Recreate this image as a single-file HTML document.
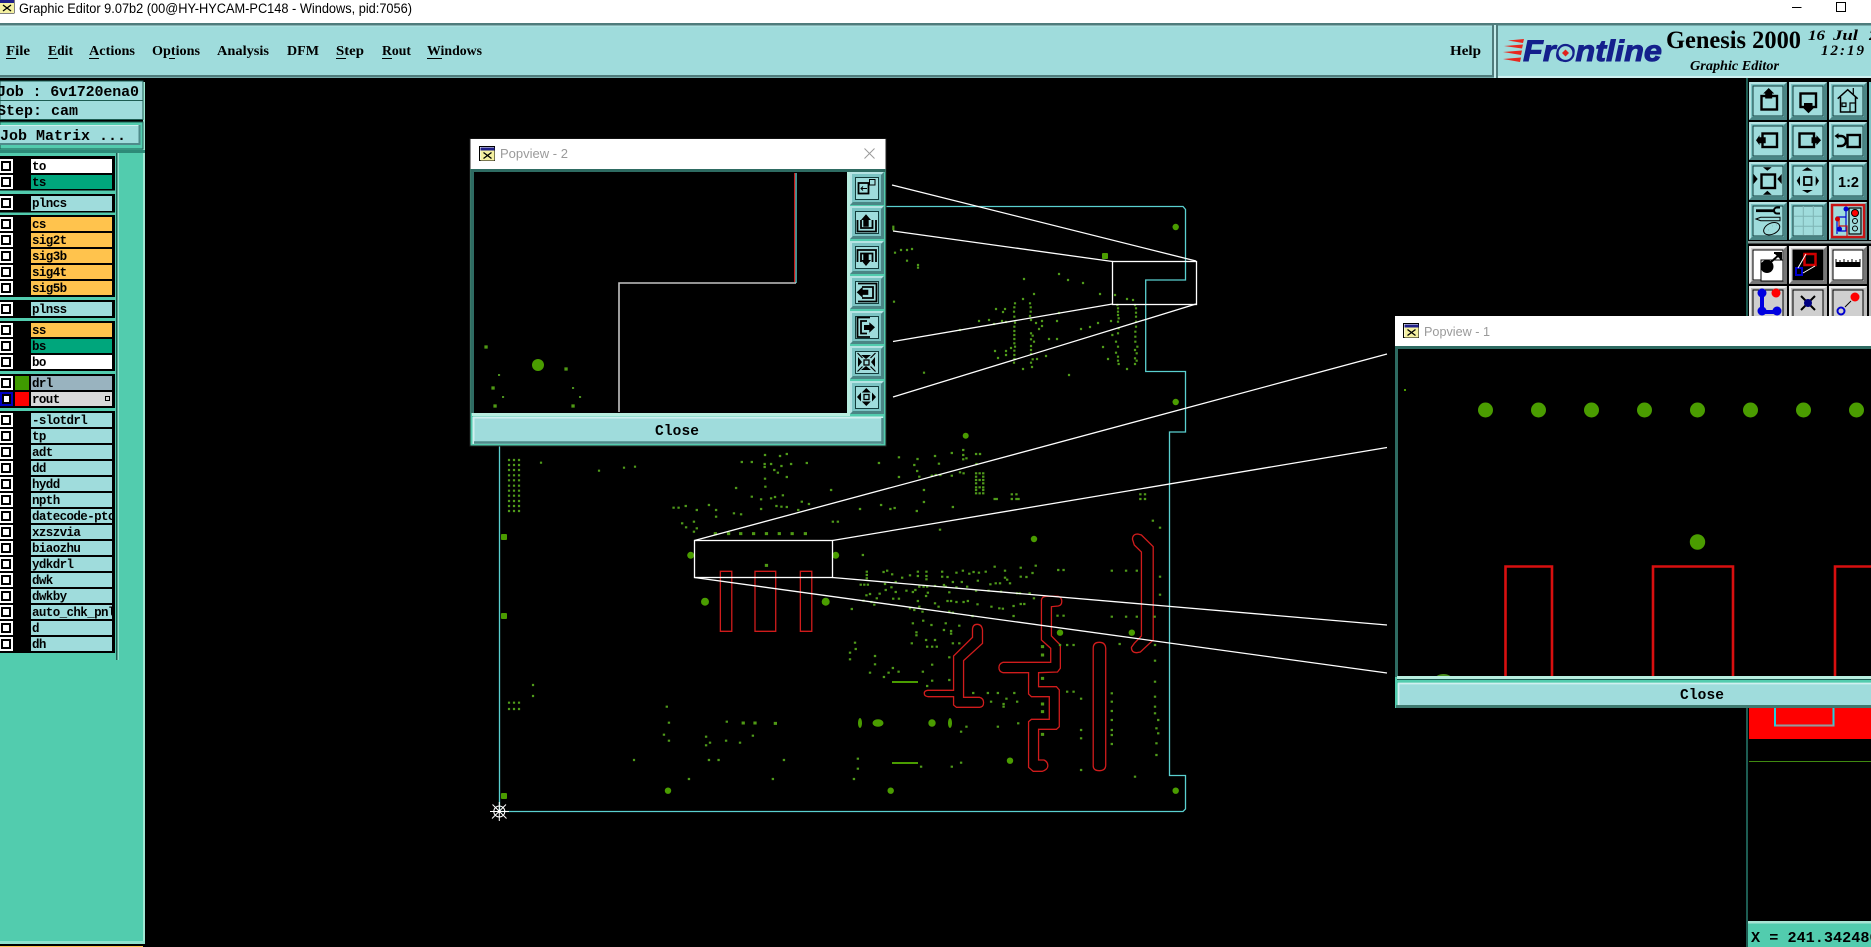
<!DOCTYPE html>
<html lang="en">
<head>
<meta charset="utf-8">
<title>Graphic Editor</title>
<style>
html,body{margin:0;padding:0;background:#000;width:1871px;height:947px;overflow:hidden}
svg{display:block}
.m{font-family:"Liberation Mono",monospace;font-weight:700;fill:#000}
.n{font-family:"Liberation Mono",monospace;font-weight:700;font-size:12.5px;letter-spacing:-.6px;fill:#000}
.s{font-family:"Liberation Serif",serif;font-weight:700;font-size:14px;fill:#000}
.t{font-family:"Liberation Sans",sans-serif;font-size:13px}
.d{font-family:"Liberation Serif",serif;font-weight:700;font-style:italic;font-size:15px;fill:#000}
</style>
</head>
<body>
<svg xmlns="http://www.w3.org/2000/svg" width="1871" height="947" viewBox="0 0 1871 947">
<defs>
<clipPath id="cn"><rect x="31" y="0" width="81" height="947"/></clipPath>
<clipPath id="p1"><rect x="1398" y="349" width="473" height="327"/></clipPath>
<g id="win">
<rect x="0" y="0" width="15" height="14" fill="#fff" stroke="#000"/>
<rect x="1" y="1" width="14" height="3" fill="#20208a"/>
<rect x="1" y="4" width="14" height="10" fill="#f4f0a0"/>
<path d="M4 6l8 6M12 6l-8 6" stroke="#000" stroke-width="1.3"/>
</g>
<g id="tb">
<rect width="38" height="38" fill="#7cc4c4"/>
<path d="M0 0h38l-2 2H2v34l-2 2z" fill="#b5e3e3"/>
<path d="M38 38H0l3-3h32V3l3-3z" fill="#4a8585"/>
<rect x="4" y="4" width="30" height="30" fill="#9fdcdc" stroke="#123c3c"/>
</g>
<g id="tw">
<rect width="38" height="38" fill="#cfcfcf"/>
<path d="M0 0h38l-2 2H2v34l-2 2z" fill="#f0f0f0"/>
<path d="M38 38H0l3-3h32V3l3-3z" fill="#777"/>
<rect x="4" y="4" width="30" height="30" fill="#fff" stroke="#000"/>
</g>
<g id="tg">
<rect width="38" height="38" fill="#bdbdbd"/>
<path d="M0 0h38l-2 2H2v34l-2 2z" fill="#eee"/>
<rect x="4" y="4" width="30" height="30" fill="#cfcfcf" stroke="#000"/>
</g>
<g id="pb">
<rect width="34" height="33" fill="#7cc4c4"/>
<path d="M0 0h34l-2 2H2v29l-2 2z" fill="#b5e3e3"/>
<path d="M34 33H0l3-3h28V3l3-3z" fill="#4a8585"/>
<rect x="5.500" y="5.500" width="23" height="22" fill="#9fdcdc" stroke="#123c3c"/>
</g>
</defs>

<rect width="1871" height="947" fill="#000"/>

<!-- title bar -->
<rect width="1871" height="23" fill="#fff"/>
<use href="#win" x="-1" y="-1"/>
<text class="t" x="19" y="13" fill="#000" textLength="393" lengthAdjust="spacingAndGlyphs" style="font-size:13.5px">Graphic Editor 9.07b2 (00@HY-HYCAM-PC148 - Windows, pid:7056)</text>
<path d="M1792 7.500h9.500" stroke="#000"/>
<rect x="1836.500" y="2.500" width="9" height="9" fill="none" stroke="#000"/>

<!-- menu bar -->
<rect y="23" width="1871" height="55" fill="#9fdcdc"/>
<rect y="23" width="1871" height="2.500" fill="#4f7c7c"/>
<rect y="25.500" width="1494" height="1" fill="#b9e8e8"/>
<rect y="75" width="1494" height="2.500" fill="#4f7c7c"/>
<rect x="1492" y="25" width="2" height="52" fill="#4f7c7c"/>
<rect x="1494" y="25" width="2" height="53" fill="#c4ecec"/>
<rect x="1496" y="25" width="2" height="53" fill="#4f7c7c"/>
<rect x="1498" y="76" width="373" height="2" fill="#d0f0f0"/>
<g>
<text class="s" x="6" y="55" textLength="24" lengthAdjust="spacingAndGlyphs">File</text>
<text class="s" x="48" y="55" textLength="25" lengthAdjust="spacingAndGlyphs">Edit</text>
<text class="s" x="89" y="55" textLength="46" lengthAdjust="spacingAndGlyphs">Actions</text>
<text class="s" x="152" y="55" textLength="48" lengthAdjust="spacingAndGlyphs">Options</text>
<text class="s" x="217" y="55" textLength="52" lengthAdjust="spacingAndGlyphs">Analysis</text>
<text class="s" x="287" y="55" textLength="32" lengthAdjust="spacingAndGlyphs">DFM</text>
<text class="s" x="336" y="55" textLength="28" lengthAdjust="spacingAndGlyphs">Step</text>
<text class="s" x="382" y="55" textLength="29" lengthAdjust="spacingAndGlyphs">Rout</text>
<text class="s" x="427" y="55" textLength="55" lengthAdjust="spacingAndGlyphs">Windows</text>
<text class="s" x="1450" y="55" textLength="31" lengthAdjust="spacingAndGlyphs">Help</text>
<path d="M6 58.500h10M48 58.500h10M89 58.500h10M169 58.500h6M336 58.500h10M382 58.500h10M427 58.500h15" stroke="#000"/>
</g>

<!-- logo -->
<g>
<path d="M1508 40.500l16-1.500-1 4zM1504 46l19-1.500-1 4zM1503 52l19-1.500-1 4.500zM1503 59l18-1.500-1 4.500z" fill="#e8281e"/>
<text x="1523" y="61" textLength="139" lengthAdjust="spacingAndGlyphs" stroke="#14208c" stroke-width=".9" style="font-family:'Liberation Sans',sans-serif;font-weight:700;font-style:italic;font-size:30px" fill="#14208c">Frontline</text>
<circle cx="1565.500" cy="53" r="8" fill="#9fdcdc" stroke="#14208c" stroke-width="2.200"/>
<path d="M1565.500 49.500l3.500 3.500-3.500 3.500-3.500-3.500z" fill="#e0201a"/>
<text x="1666" y="48" textLength="135" lengthAdjust="spacingAndGlyphs" style="font-family:'Liberation Serif',serif;font-weight:700;font-size:25px" fill="#000">Genesis 2000</text>
<text x="1690" y="70" textLength="89" lengthAdjust="spacingAndGlyphs" style="font-family:'Liberation Serif',serif;font-weight:700;font-style:italic;font-size:14px" fill="#000">Graphic Editor</text>
<text class="d" x="1808" y="40" textLength="17" lengthAdjust="spacingAndGlyphs">16</text>
<text class="d" x="1833" y="40" textLength="25" lengthAdjust="spacingAndGlyphs">Jul</text>
<text class="d" x="1869" y="40">2</text>
<text class="d" x="1821" y="55" textLength="43">12:19</text>
</g>

<!-- left panel -->
<rect y="78" width="143" height="863" fill="#52ccae"/>
<rect x="143" y="78" width="2" height="866" fill="#a0e8d4"/>
<rect y="941" width="145" height="3" fill="#8fe2cc"/>
<rect y="944" width="143" height="2" fill="#000"/>
<rect y="946" width="143" height="1" fill="#ffc34d"/>
<rect y="78" width="145" height="4" fill="#000"/>
<rect y="81" width="143" height="19.500" fill="#9fdcdc" stroke="#1d5c52"/>
<rect y="100.500" width="143" height="19" fill="#9fdcdc" stroke="#1d5c52"/>
<rect y="120" width="143" height="2" fill="#000"/>
<rect y="122" width="143" height="27" fill="#52ccae" stroke="#1d5c52"/>
<rect y="125" width="139" height="20" fill="#9fdcdc"/>
<path d="M0 125.500h139" stroke="#d0f0f0"/>
<path d="M0 144h139.500V125" fill="none" stroke="#4f8a8a" stroke-width="2"/>
<rect y="150" width="145" height="3" fill="#2d8a78"/>
<text class="m" x="-3" y="96" style="font-size:15px" textLength="142">Job : 6v1720ena0</text>
<text class="m" x="-3" y="115" style="font-size:15px">Step: cam</text>
<text class="m" x="0" y="140" style="font-size:15px">Job Matrix ...</text>
<rect x="116" y="153" width="1.500" height="507" fill="#1d5c52"/>
<rect x="117.500" y="153" width="1.500" height="507" fill="#8fe2cc"/>

<!-- layer frames -->
<g fill="#000">
<rect y="156" width="115" height="34.500"/>
<rect y="194" width="115" height="18.500"/>
<rect y="215" width="115" height="82"/>
<rect y="300" width="115" height="18"/>
<rect y="321" width="115" height="50"/>
<rect y="374" width="115" height="34"/>
<rect y="411" width="115" height="242"/>
</g>
<g fill="#fff">
<rect y="159" width="13" height="14"/><rect y="175" width="13" height="14"/><rect y="196" width="13" height="14"/>
<rect y="217" width="13" height="14"/><rect y="233" width="13" height="14"/><rect y="249" width="13" height="14"/><rect y="265" width="13" height="14"/><rect y="281" width="13" height="14"/>
<rect y="302" width="13" height="14"/><rect y="323" width="13" height="14"/><rect y="339" width="13" height="14"/><rect y="355" width="13" height="14"/>
<rect y="376" width="13" height="14"/>
<rect y="413" width="13" height="14"/><rect y="429" width="13" height="14"/><rect y="445" width="13" height="14"/><rect y="461" width="13" height="14"/><rect y="477" width="13" height="14"/><rect y="493" width="13" height="14"/><rect y="509" width="13" height="14"/><rect y="525" width="13" height="14"/><rect y="541" width="13" height="14"/><rect y="557" width="13" height="14"/><rect y="573" width="13" height="14"/><rect y="589" width="13" height="14"/><rect y="605" width="13" height="14"/><rect y="621" width="13" height="14"/><rect y="637" width="13" height="14"/>
</g>
<rect y="392" width="13" height="14" fill="#0000c0"/>
<rect x="2" y="394" width="9" height="10" fill="#fff"/>
<g fill="none" stroke="#000" stroke-width="2">
<rect x="2" y="162" width="8" height="8"/><rect x="2" y="178" width="8" height="8"/><rect x="2" y="199" width="8" height="8"/>
<rect x="2" y="220" width="8" height="8"/><rect x="2" y="236" width="8" height="8"/><rect x="2" y="252" width="8" height="8"/><rect x="2" y="268" width="8" height="8"/><rect x="2" y="284" width="8" height="8"/>
<rect x="2" y="305" width="8" height="8"/><rect x="2" y="326" width="8" height="8"/><rect x="2" y="342" width="8" height="8"/><rect x="2" y="358" width="8" height="8"/>
<rect x="2" y="379" width="8" height="8"/><rect x="3" y="395" width="7" height="8"/>
<rect x="2" y="416" width="8" height="8"/><rect x="2" y="432" width="8" height="8"/><rect x="2" y="448" width="8" height="8"/><rect x="2" y="464" width="8" height="8"/><rect x="2" y="480" width="8" height="8"/><rect x="2" y="496" width="8" height="8"/><rect x="2" y="512" width="8" height="8"/><rect x="2" y="528" width="8" height="8"/><rect x="2" y="544" width="8" height="8"/><rect x="2" y="560" width="8" height="8"/><rect x="2" y="576" width="8" height="8"/><rect x="2" y="592" width="8" height="8"/><rect x="2" y="608" width="8" height="8"/><rect x="2" y="624" width="8" height="8"/><rect x="2" y="640" width="8" height="8"/>
</g>
<rect x="15" y="376" width="14" height="14" fill="#3f9a00"/>
<rect x="15" y="392" width="14" height="14" fill="#ff0000"/>
<g>
<rect x="31" y="159" width="81" height="14" fill="#fff"/><rect x="31" y="175" width="81" height="14" fill="#00a67c"/>
<rect x="31" y="196" width="81" height="15" fill="#9fdcdc"/>
<rect x="31" y="217" width="81" height="14" fill="#ffc34d"/><rect x="31" y="233" width="81" height="14" fill="#ffc34d"/><rect x="31" y="249" width="81" height="14" fill="#ffc34d"/><rect x="31" y="265" width="81" height="14" fill="#ffc34d"/><rect x="31" y="281" width="81" height="14" fill="#ffc34d"/>
<rect x="31" y="302" width="81" height="14" fill="#9fdcdc"/>
<rect x="31" y="323" width="81" height="14" fill="#ffc34d"/><rect x="31" y="339" width="81" height="14" fill="#00a67c"/><rect x="31" y="355" width="81" height="14" fill="#fff"/>
<rect x="31" y="376" width="81" height="14" fill="#99b3bf"/><rect x="31" y="392" width="81" height="14" fill="#d9d9d9"/>
<g fill="#9fdcdc">
<rect x="31" y="413" width="81" height="14"/><rect x="31" y="429" width="81" height="14"/><rect x="31" y="445" width="81" height="14"/><rect x="31" y="461" width="81" height="14"/><rect x="31" y="477" width="81" height="14"/><rect x="31" y="493" width="81" height="14"/><rect x="31" y="509" width="81" height="14"/><rect x="31" y="525" width="81" height="14"/><rect x="31" y="541" width="81" height="14"/><rect x="31" y="557" width="81" height="14"/><rect x="31" y="573" width="81" height="14"/><rect x="31" y="589" width="81" height="14"/><rect x="31" y="605" width="81" height="14"/><rect x="31" y="621" width="81" height="14"/><rect x="31" y="637" width="81" height="14"/>
</g>
</g>
<rect x="105.500" y="396.500" width="4" height="4" fill="none" stroke="#000"/>
<g clip-path="url(#cn)">
<text class="n" x="32" y="170">to</text><text class="n" x="32" y="186">ts</text><text class="n" x="32" y="207">plncs</text>
<text class="n" x="32" y="228">cs</text><text class="n" x="32" y="244">sig2t</text><text class="n" x="32" y="260">sig3b</text><text class="n" x="32" y="276">sig4t</text><text class="n" x="32" y="292">sig5b</text>
<text class="n" x="32" y="313">plnss</text><text class="n" x="32" y="334">ss</text><text class="n" x="32" y="350">bs</text><text class="n" x="32" y="366">bo</text>
<text class="n" x="32" y="387">drl</text><text class="n" x="32" y="403">rout</text>
<text class="n" x="32" y="424">-slotdrl</text><text class="n" x="32" y="440">tp</text><text class="n" x="32" y="456">adt</text><text class="n" x="32" y="472">dd</text><text class="n" x="32" y="488">hydd</text><text class="n" x="32" y="504">npth</text><text class="n" x="32" y="520">datecode-ptc</text><text class="n" x="32" y="536">xzszvia</text><text class="n" x="32" y="552">biaozhu</text><text class="n" x="32" y="568">ydkdrl</text><text class="n" x="32" y="584">dwk</text><text class="n" x="32" y="600">dwkby</text><text class="n" x="32" y="616">auto_chk_pnl</text><text class="n" x="32" y="632">d</text><text class="n" x="32" y="648">dh</text>
</g>

<!-- board outline -->
<path d="M499.500 440V811.500H1183l2.500-2.500V775.500H1169.500V432H1185.500V371.500H1145.700V280H1185.500V209.500L1183 206.500H880" fill="none" stroke="#5ad0d0" stroke-width="1.300"/>

<!-- red routs -->
<g transform="translate(660 430) scale(.35714 .33333)" fill="none" stroke="#d01c1c" stroke-width="1.300">
<path vector-effect="non-scaling-stroke" d="M169 424h32v180h-32zM266 424h58v180h-58zM393 424h32v180h-32z"/>
<path vector-effect="non-scaling-stroke" d="M875 600Q875 583 888 583T903 600V640L850 692V802H895Q906 805 906 818T895 832H830L822 825V800H750Q740 798 740 790T750 781H822V678L875 622Z"/>
<path vector-effect="non-scaling-stroke" d="M1068 510Q1070 499 1082 499H1115Q1125 502 1125 514T1115 528L1096 530V618L1121 645V715L1113 726 1060 728V770H1110L1118 780V890L1110 898H1060V990H1075Q1086 995 1086 1007T1070 1024H1045L1032 1012V875L1040 868H1090V800H1040L1032 792V728H960Q949 725 949 713T960 697H1094V655L1068 630Z"/>
<path vector-effect="non-scaling-stroke" d="M1213 655Q1213 637 1230 637T1248 655V1005Q1248 1022 1230 1022T1213 1005Z"/>
<path vector-effect="non-scaling-stroke" d="M1323 328Q1323 312 1338 312L1348 315 1381 350V630L1345 666 1335 668Q1320 668 1320 652L1328 640 1348 618V366L1328 345Z"/>
</g>

<!-- small dots -->
<g fill="none" stroke="#4f9a1a" stroke-linecap="square">
<path transform="translate(660 430) scale(.35714 .33333)" stroke-width="6.500" d="M294 75h.1M336 78h.1M355 72h.1M229 96h.1M257 96h.1M293 102h.1M311 102h.1M340 108h.1M367 102h.1M411 99h.1M293 111h.1M320 120h.1M330 128h.1M294 146h.1M355 141h.1M213 174h.1M295 170h.1M283 208h.1M257 200h.1M311 205h.1M322 201h.1M344 196h.1M479 180h.1M397 215h.1M417 222h.1M326 228h.1M340 230h.1M355 231h.1M283 237h.1M137 225h.1M72 228h.1M52 233h.1M38 233h.1M103 240h.1M157 240h.1M207 250h.1M227 253h.1M157 260h.1M62 280h.1M95 275h.1M73 292h.1M103 295h.1M95 305h.1M484 275h.1M498 275h.1M387 240h.1M669 82h.1M770 78h.1M817 69h.1M849 60h.1M849 75h.1M849 88h.1M858 85h.1M885 72h.1M896 72h.1M721 87h.1M712 105h.1M613 99h.1M781 101h.1M720 123h.1M669 141h.1M739 180h.1M739 216h.1M619 225h.1M560 237h.1M645 237h.1M657 234h.1M719 243h.1M820 231h.1M784 299h.1M726 140h.1M761 137h.1M772 135h.1M785 135h.1M817 137h.1M840 127h.1M850 130h.1M886 102h.1M885 130h.1M895 130h.1M905 130h.1M885 140h.1M905 140h.1M885 150h.1M895 150h.1M905 150h.1M885 160h.1M905 160h.1M885 172h.1M895 172h.1M905 172h.1M885 180h.1M905 180h.1M885 190h.1M895 190h.1M905 190h.1M937 207h6M985 193h.1M998 193h.1M985 207h.1M998 207h6M1345 193h.1M1358 193h.1M1345 207h.1M1358 207h.1M568 375h.1M579 425h.1M579 435h.1M579 445h.1M562 464h.1M572 464h.1M582 464h.1M636 422h.1M626 426h.1M650 433h.1M678 443h.1M700 436h.1M722 425h.1M722 438h.1M746 425h.1M746 438h.1M746 448h.1M790 425h.1M790 440h.1M805 441h.1M830 428h.1M848 422h.1M866 431h.1M878 426h.1M893 428h.1M912 425h.1M937 410h.1M966 422h.1M1010 413h.1M1052 407h.1M1043 429h.1M1010 440h.1M1026 441h.1M966 443h.1M972 449h.1M890 452h.1M845 456h.1M820 456h.1M795 465h.1M770 468h.1M748 470h.1M738 470h.1M660 456h.1M630 462h.1M648 472h.1M660 486h.1M690 482h.1M708 486h.1M715 480h.1M726 470h.1M750 488h.1M745 498h.1M632 480h.1M615 491h.1M588 492h.1M578 496h.1M607 505h.1M592 516h.1M570 512h.1M600 524h.1M653 506h.1M669 506h.1M722 513h.1M726 530h.1M770 520h.1M780 530h.1M805 513h.1M815 513h.1M830 516h.1M850 516h.1M862 513h.1M889 523h.1M928 530h.1M950 535h.1M960 536h.1M990 528h.1M1010 522h.1M1020 522h.1M1035 490h.1M1047 505h.1M1000 490h.1M980 460h.1M940 460h.1M925 463h.1M952 460h.1M885 482h.1M920 482h.1M955 485h.1M810 487h.1M800 470h.1M830 472h.1M860 470h.1M537 537h.1M700 535h.1M712 540h.1M735 545h.1M810 545h.1M820 548h.1M875 558h.1M990 558h.1M1008 490h.1M1115 420h.1M1130 420h.1M1265 422h.1M1305 422h.1M1335 422h.1M1400 440h.1M1400 494h.1M1113 557h.1M1130 557h.1M1265 560h.1M1305 560h.1M1335 560h.1M1385 560h.1M708 580h.1M737 572h.1M760 585h.1M800 580h.1M838 587h.1M795 600h.1M815 603h.1M815 611h.1M718 607h.1M718 616h.1M705 640h.1M745 630h.1M770 630h.1M748 650h.1M762 650h.1M775 650h.1M820 640h.1M838 640h.1M1380 272h.1M1400 293h.1M1120 645h.1M1140 645h.1M1158 645h.1M1287 642h.1M1386 645h.1M1386 692h.1M1386 755h.1M1386 800h.1M1386 830h.1M1386 850h.1M1395 870h.1M1390 895h.1M1390 940h.1M1390 975h.1M1395 910h.1M1265 790h.1M1265 815h.1M1265 843h.1M1265 870h.1M1265 900h.1M1265 915h.1M1265 942h.1M1140 785h.1M1158 785h.1M1179 806h.1M1179 900h.1M1179 925h.1M1179 1020h.1M1330 1040h.1M546 638h.1M548 657h.1M532 668h.1M532 688h.1M602 678h.1M602 703h.1M588 728h.1M627 741h.1M640 728h.1M652 714h.1M668 725h.1M736 725h.1M762 704h.1M762 752h.1M810 682h.1M810 750h.1M877 789h.1M918 789h.1M946 789h.1M992 789h.1M927 815h.1M962 822h.1M962 830h.1M970 806h.1M1000 815h.1M748 768h.1M858 890h.1M843 905h.1M946 890h.1M1003 880h.1M19 830h.1M25 878h.1M11 914h.1M25 932h.1M129 920h.1M140 938h.1M129 946h.1M187 875h.1M185 932h.1M224 938h.1M260 917h.1M137 990h.1M164 990h.1M347 990h.1M81 1047h.1M316 1047h.1M554 986h.1M554 1016h.1M543 1047h.1M731 1010h.1M817 1010h.1M843 998h.1"/>
<path transform="translate(660 430) scale(.35714 .33333)" stroke="#4f9a14" stroke-width="9" d="M155 311h.1M192 311h.1M226 311h.1M262 311h.1M298 311h.1M334 311h.1M370 311h.1M407 311h.1M298 406h.1M1071 650h.1M1071 675h.1M1071 745h.1M1071 822h.1M1071 845h.1M1071 913h.1M233 879h.1M266 879h.1M323 880h.1"/>
<path transform="translate(480 440) scale(.33333)" stroke-width="6.500" d="M87 60h.1M102 60h.1M117 60h.1M87 75h.1M102 75h.1M117 75h.1M87 90h.1M102 90h.1M117 90h.1M87 106h.1M102 106h.1M117 106h.1M87 121h.1M102 121h.1M117 121h.1M87 137h.1M102 137h.1M117 137h.1M87 152h.1M102 152h.1M117 152h.1M87 167h.1M102 167h.1M117 167h.1M87 183h.1M102 183h.1M117 183h.1M87 198h.1M102 198h.1M117 198h.1M87 213h.1M102 213h.1M117 213h.1M183 68h.1M357 92h.1M432 83h.1M465 80h.1M159 735h.1M159 768h.1M87 788h.1M102 788h.1M117 788h.1M87 807h.1M102 807h.1M117 807h.1M462 960h.1"/>
<path transform="translate(880 190) scale(.33333)" stroke-width="6.500" d="M40 110v8M45 188h.1M63 180h.1M81 180h.1M96 177h.1M81 212h.1M114 225h.1M114 233h.1M42 335h.1M132 548h.1M432 267h.1M537 252h.1M564 270h.1M609 279h.1M660 312h.1M705 315h.1M741 327h.1M759 330h.1M462 312h.1M429 327h.1M405 340h.1M403 352h.1M402 365h.1M403 380h.1M405 398h.1M403 410h.1M403 423h.1M403 435h.1M403 447h.1M403 460h.1M405 470h.1M403 482h.1M403 495h.1M403 507h.1M402 518h.1M450 340h.1M452 352h.1M452 365h.1M450 378h.1M453 390h.1M453 430h.1M458 437h.1M453 448h.1M462 455h.1M453 468h.1M453 480h.1M453 492h.1M458 508h.1M453 518h.1M712 345h.1M714 355h.1M714 365h.1M714 375h.1M716 385h.1M714 395h.1M716 415h.1M714 430h.1M708 455h.1M714 470h.1M708 488h.1M714 500h.1M714 512h.1M716 522h.1M765 345h.1M768 355h.1M768 368h.1M768 380h.1M768 395h.1M768 410h.1M766 425h.1M766 440h.1M766 455h.1M772 470h.1M765 480h.1M770 490h.1M765 505h.1M770 512h.1M765 522h.1M348 357h.1M375 357h.1M369 366h.1M297 393h.1M327 390h.1M366 393h.1M342 402h.1M378 396h.1M468 399h.1M486 393h.1M486 408h.1M477 417h.1M537 369h.1M531 393h.1M507 447h.1M531 447h.1M345 483h.1M378 483h.1M378 495h.1M354 504h.1M393 474h.1M471 507h.1M498 498h.1M429 537h.1M456 531h.1M603 417h.1M630 411h.1M654 399h.1M693 393h.1M697 435h.1M669 471h.1M684 507h.1M741 537h.1M567 555h.1M240 420h.1"/>
</g>

<!-- big green pads -->
<g fill="#4a9c00">
<rect x="501" y="534" width="6" height="6" rx="1"/><rect x="501" y="613" width="6" height="6" rx="1"/><rect x="501" y="793" width="6" height="6" rx="1"/>
<circle cx="690.700" cy="555.300" r="3.500"/><circle cx="835.700" cy="555.300" r="3.500"/>
<circle cx="705" cy="601.700" r="4"/><circle cx="825.700" cy="601.700" r="4"/>
<circle cx="668" cy="790.700" r="3.200"/><circle cx="890.700" cy="790.700" r="3.200"/><circle cx="1175.700" cy="790.700" r="3.200"/>
<circle cx="965.700" cy="435.700" r="3"/><circle cx="1034" cy="539" r="3.200"/><circle cx="1060" cy="632.700" r="3.200"/><circle cx="1131.800" cy="632.700" r="3.200"/><circle cx="1010" cy="760.700" r="3.200"/>
<circle cx="932" cy="723" r="3.700"/><ellipse cx="878" cy="723" rx="5.500" ry="3.800"/><ellipse cx="860" cy="723" rx="2" ry="5"/><ellipse cx="950" cy="723" rx="2" ry="5"/>
<rect x="892" y="681" width="26" height="2"/><rect x="892" y="762" width="26" height="2"/>
<circle cx="1175.700" cy="227" r="3.200"/><rect x="1102" y="253" width="6" height="6" rx="1"/><circle cx="1175.700" cy="402" r="3.200"/>
</g>

<!-- white zoom rectangles -->
<g fill="none" stroke="#fff" stroke-width="1.300">
<rect x="1112.500" y="261.500" width="84" height="43"/>
<path d="M892 185L1196 261M893 231L1112.500 261.500M893 341.500L1112.500 304M893 397L1196 304"/>
<rect x="694.500" y="540.500" width="138" height="37"/>
<path d="M694.500 540.500L1387 354M832.500 540.500L1387 447.500M832.500 577.500L1387 625M694.500 577.500L1387 673"/>
</g>

<!-- origin marker -->
<g stroke="#fff" stroke-width="1" fill="none">
<circle cx="499.300" cy="811.500" r="5.500"/>
<path d="M499.300 802v19M490 811.500h19M492.500 804.500l14 14M506 804.500l-14 14"/>
</g>
<circle cx="499.300" cy="811.500" r="1.500" fill="#fff"/>

<!-- right toolbar -->
<rect x="1746" y="78" width="125" height="869" fill="#000"/>
<rect x="1746" y="78" width="2" height="869" fill="#1d5c52"/>
<use href="#tb" x="1749" y="82"/><use href="#tb" x="1789" y="82"/><use href="#tb" x="1829" y="82"/>
<use href="#tb" x="1749" y="122"/><use href="#tb" x="1789" y="122"/><use href="#tb" x="1829" y="122"/>
<use href="#tb" x="1749" y="162"/><use href="#tb" x="1789" y="162"/><use href="#tb" x="1829" y="162"/>
<use href="#tb" x="1749" y="202"/><use href="#tb" x="1789" y="202"/><use href="#tb" x="1829" y="202"/>
<rect x="1869" y="82" width="2" height="158" fill="#7cc4c4"/>
<rect x="1748" y="241" width="123" height="2.500" fill="#8a9a9a"/>
<use href="#tw" x="1749" y="246"/><use href="#tw" x="1789" y="246"/><use href="#tw" x="1829" y="246"/>
<use href="#tg" x="1749" y="286"/><use href="#tg" x="1789" y="286"/><use href="#tg" x="1829" y="286"/>
<rect x="1869" y="246" width="2" height="70" fill="#bbb"/>

<!-- tool icons row 1-3 -->
<g fill="none" stroke="#000" stroke-width="2.400">
<rect x="1761.500" y="96" width="15.500" height="13.500"/>
<rect x="1800.500" y="93.500" width="15.500" height="13.500"/>
<path d="M1837.700 98.700L1847.700 89.700 1857.700 98.700M1840.500 97V112H1855.500V97" stroke-width="1.500"/>
<path d="M1853.300 88V94M1842 103h4v3.500h-4zM1850 112V103h5" stroke-width="1.200"/>
<rect x="1762.500" y="133.500" width="14.500" height="13.500"/>
<rect x="1799.500" y="133.500" width="14.500" height="13.500"/>
<rect x="1847.500" y="135" width="12.500" height="12"/>
<path d="M1838 136h3a5 5 0 0 1 0 10h-4"/>
<rect x="1761.500" y="174.500" width="13.500" height="13.500"/>
<rect x="1804" y="177" width="7.500" height="8" stroke-width="1.800"/>
</g>
<g fill="#000">
<path d="M1768.700 88l5.500 5.500h-2v5h-7v-5h-2z"/>
<path d="M1804 103h8.500v4.300h2l-6 6-6-6h1.500z"/>
<path d="M1756 140.300l3.500-5v2h6.200v6h-6.200v2z"/>
<path d="M1821 140.300l-4.500-5v2h-5v6h5v2z"/>
<path d="M1834.500 136l4-3v6z"/>
<path d="M1763 167.300h8.700l-4.350 3.400zM1763 194.700h8.700l-4.350-4zM1753.500 174v10l4.200-5zM1781.700 174v10l-4.400-5z"/>
<path d="M1807.300 167.300l-5.300 3.400h10.700zM1807.300 193l-5.300-3h10.700zM1796.700 180.700l3.300-4.700v10zM1819 180.700l-3.300-4.700v10z"/>
</g>
<text x="1838" y="187" textLength="21" lengthAdjust="spacingAndGlyphs" style="font-family:'Liberation Sans',sans-serif;font-weight:700;font-size:15px" fill="#000">1:2</text>

<!-- tool icons row 4 -->
<g fill="none" stroke="#000">
<rect x="1756" y="209.300" width="18" height="2.800" fill="#000" stroke="none"/>
<path d="M1780 207.500h-3a3 3 0 1 0 0 6h3" stroke-width="2"/>
<path d="M1780 217.300h-19.300l-4.700 1.700 4.700 1.700H1780z" stroke-width="1"/>
<ellipse cx="1771.700" cy="228.700" rx="8.500" ry="5.500" transform="rotate(-25 1771.700 228.700)" stroke-width="1"/>
<path d="M1772 226h.1M1776 225h.1M1768 230h.1" stroke-width="1.500"/>
<path d="M1803.300 206v29M1813.300 206v29M1794 216.300h28M1794 226.300h28" stroke="#7fb5b5" stroke-width="1"/>
</g>
<rect x="1832" y="205" width="32" height="32" fill="#9fdcdc" stroke="#c81414" stroke-width="2.500"/>
<g fill="none">
<path d="M1846 208v9h-9v17M1846 217v14h-8" stroke="#0000d0" stroke-width="1.200"/>
<path d="M1839 219v7h8v10" stroke="#c81414" stroke-width="1.200"/>
<rect x="1849" y="208" width="12" height="26" fill="#9fdcdc" stroke="#000" stroke-width="1.200"/>
<circle cx="1855" cy="213" r="3.500" fill="#f00" stroke="#000"/>
<circle cx="1855" cy="221" r="2.500" stroke="#000"/><circle cx="1855" cy="228.500" r="2.500" stroke="#000"/>
<circle cx="1846" cy="209" r="2.500" fill="#0000d0"/><circle cx="1837.500" cy="219" r="2.500" fill="#d00000"/><circle cx="1839.500" cy="229" r="2.500" fill="#0000d0"/>
</g>
<rect x="1761" y="260" width="22" height="21" fill="#fff" stroke="#000"/>
<circle cx="1767" cy="266.500" r="6.500" fill="#000"/>
<path d="M1771 262l9-8M1774 253h7v7" fill="#000" stroke="#000" stroke-width="2"/>
<rect x="1793" y="250" width="30" height="30" fill="#000"/>
<rect x="1804.500" y="254" width="11" height="11" fill="none" stroke="#d00000" stroke-width="2.500"/>
<rect x="1796" y="268" width="6" height="7" fill="none" stroke="#0000d0" stroke-width="2"/>
<path d="M1806 254l-8 14M1803 273l12-7" stroke="#fff"/>
<path d="M1835.500 262h25v5h-25z" fill="#000"/>
<path d="M1836 262v-3M1840 262v-2M1844 262v-3M1848 262v-2M1852 262v-3M1856 262v-2M1860 262v-3" stroke="#000"/>
<path d="M1762 295v17M1762 312h15" stroke="#0000e0" stroke-width="4"/>
<circle cx="1762" cy="293" r="4.500" fill="#0000e0"/><circle cx="1776" cy="293" r="4.500" fill="#f00"/><circle cx="1762" cy="311" r="4.500" fill="#0000e0"/><circle cx="1777" cy="311" r="4.500" fill="#0000e0"/>
<path d="M1801 296l14 14M1815 296l-14 14" stroke="#000" stroke-width="2"/><circle cx="1808" cy="303" r="4" fill="#000080"/>
<circle cx="1855" cy="297" r="4.500" fill="#f00"/><circle cx="1841" cy="311" r="3.500" fill="none" stroke="#0000d0" stroke-width="2"/><path d="M1845 307l6-6" stroke="#000"/>

<!-- lower right preview -->
<rect x="1749" y="708" width="122" height="31" fill="#ff0000"/>
<path d="M1775 708v17.500h58.500V708" fill="none" stroke="#22d0e0" stroke-width="2"/>
<path d="M1776 725.500h58" stroke="#9a9a9a" stroke-width="1.800"/>
<path d="M1749 761.500h122" stroke="#3f8a10"/>
<rect x="1748" y="921" width="123" height="2.500" fill="#a8e4d4"/>
<rect x="1748" y="923.500" width="123" height="24" fill="#52ccae"/>
<text class="m" x="1751" y="942" style="font-size:15.200px">X = 241.342480</text>

<!-- popup 2 -->
<g>
<rect x="470" y="139" width="416" height="307" fill="#52ccae" stroke="#222" stroke-width="1"/>
<rect x="470.500" y="139" width="415" height="30" fill="#fff"/>
<use href="#win" x="479.500" y="146.500"/>
<text class="t" x="500" y="158" fill="#9a9a9a" textLength="68" lengthAdjust="spacingAndGlyphs">Popview - 2</text>
<path d="M864.500 148.500l10 10M874.500 148.500l-10 10" stroke="#9a9a9a"/>
<rect x="471" y="169" width="414" height="3" fill="#2e6b62"/>
<rect x="471" y="172" width="3" height="241" fill="#2e6b62"/>
<rect x="474" y="172" width="373" height="241" fill="#000"/>
<rect x="847" y="172" width="3" height="244" fill="#b8eee0"/>
<rect x="472" y="413" width="375" height="3" fill="#b8eee0"/>
<path d="M796 173V283" stroke="#5ad0d0" stroke-width="1.400"/>
<path d="M794.600 173V282" stroke="#c81818" stroke-width="1.200"/>
<path d="M619 412V283H796" fill="none" stroke="#c4c4c4" stroke-width="1.600"/>
<circle cx="538" cy="365" r="6" fill="#4a9c00"/>
<path d="M486 347h.1M566 369h.1M493 388h.1M495 406h.1M573 406h.1" stroke="#4f9a14" stroke-width="3.200" stroke-linecap="square"/>
<path d="M499 375h.1M503 397h.1M573 388h.1M580 397h.1" stroke="#4a8f1e" stroke-width="2" stroke-linecap="square"/>
<use href="#pb" x="850" y="172"/><use href="#pb" x="850" y="206"/><use href="#pb" x="850" y="241"/><use href="#pb" x="850" y="276"/><use href="#pb" x="850" y="311"/><use href="#pb" x="850" y="346"/><use href="#pb" x="850" y="381"/>
<g fill="none" stroke="#000" stroke-width="1.800">
<rect x="858.500" y="183" width="10" height="10.500"/>
<rect x="869.500" y="179.500" width="5.500" height="5.500" stroke-width="1"/>
<path d="M861 188.500h6M863 186.500l-2 2 2 2" stroke-width="1"/>
<path d="M857.500 220v11.500H876V220M861 220v8h11.500v-8"/>
<path d="M857.500 262v-12H876v12M861 262v-8.500h11.500v8.500"/>
<path d="M858 283.500H876.500V301.500H858M862 287H873V298H862"/>
<path d="M870 317.500H857.500V337H870M867 321H861V333.500H867"/>
<rect x="864" y="360" width="5" height="5" stroke-width="1.300"/>
<path d="M857.500 353l5 5M875.500 353l-5 5M857.500 371.500l5-5M875.500 371.500l-5-5" stroke-width="1.200"/>
<rect x="864" y="394.500" width="5" height="5" stroke-width="1.300"/>
</g>
<g fill="#000">
<path d="M866 214.300l5 5.700h-2.300v6.700h-5.400V220H861z"/>
<path d="M866 266l-5-6h2.300v-6.700h5.400v6.700h2.300z"/>
<path d="M856.700 292.300l6-5.600v3h5.600v5.200h-5.600v3z"/>
<path d="M875 327.300l-5.700-5v2.700H864v5h5.300v2.700z"/>
<path d="M861 355h10l-5 4zM861 370h10l-5-4zM858 357v10l4-5zM875 357v10l-4-5z"/>
<path d="M866.300 388l-4.500 4.500h9zM866.300 406l-4.500-4.500h9zM857 397l4-4.500v9zM876 397l-4-4.500v9z"/>
</g>
<rect x="473" y="417" width="410" height="27" fill="#9fdcdc"/>
<path d="M473 417.500h410M473.500 417v27" stroke="#d0f0f0" stroke-width="2"/>
<path d="M474 442.500h409M882.500 418v26" stroke="#4f8a8a" stroke-width="2.500"/>
<text class="m" x="655" y="435" style="font-size:14.500px" textLength="44">Close</text>
</g>

<!-- popup 1 -->
<g>
<rect x="1395" y="316" width="476" height="392" fill="#52ccae"/>
<rect x="1395" y="316" width="476" height="30" fill="#fff"/>
<use href="#win" x="1403.500" y="323.500"/>
<text class="t" x="1424" y="336" fill="#9a9a9a" textLength="66" lengthAdjust="spacingAndGlyphs">Popview - 1</text>
<rect x="1395" y="346" width="476" height="3" fill="#2e6b62"/>
<rect x="1395" y="349" width="3" height="328" fill="#2e6b62"/>
<rect x="1398" y="349" width="473" height="327" fill="#000"/>
<rect x="1397" y="676" width="474" height="3" fill="#b8eee0"/>
<rect x="1397" y="679" width="474" height="1" fill="#1d5c52"/>
<g clip-path="url(#p1)">
<g fill="#4a9c00">
<circle cx="1485.500" cy="410" r="7.500"/><circle cx="1538.500" cy="410" r="7.500"/><circle cx="1591.500" cy="410" r="7.500"/><circle cx="1644.500" cy="410" r="7.500"/><circle cx="1697.500" cy="410" r="7.500"/><circle cx="1750.500" cy="410" r="7.500"/><circle cx="1803.500" cy="410" r="7.500"/><circle cx="1856.500" cy="410" r="7.500"/><circle cx="1697.500" cy="542" r="7.700"/>
<rect x="1404" y="389" width="2" height="2"/>
<ellipse cx="1443.500" cy="679" rx="8.500" ry="5" fill="#4a8f1e"/>
</g>
<path d="M1505.500 676V566.500H1552V676M1653 676V566.500H1733V676M1835 676V566.500H1871" fill="none" stroke="#d80f0f" stroke-width="2.600"/>
</g>
<rect x="1398" y="683" width="473" height="22" fill="#9fdcdc"/>
<path d="M1398 683.500h473M1398.500 683v22" stroke="#d0f0f0" stroke-width="1.800"/>
<rect x="1396" y="705" width="475" height="3" fill="#3f7a70"/>
<text class="m" x="1680" y="699" style="font-size:14.500px" textLength="44">Close</text>
</g>
</svg>
</body>
</html>
